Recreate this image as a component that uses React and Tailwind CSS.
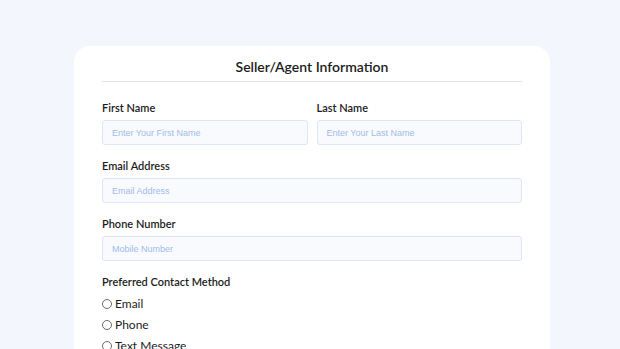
function Field({ label, placeholder }) {
  return (
    <div className="flex flex-col">
      <label className="mb-[5px] text-[11px] font-semibold leading-[14px] text-[#1c1c1c]">{label}</label>
      <input
        type="text"
        placeholder={placeholder}
        className="h-[25px] rounded-[3px] border border-[#dde6f4] bg-[#f8fafe] px-[9px] text-[9px] outline-none placeholder:text-[#a3bbe8] [font-family:'Liberation_Sans',Arial,sans-serif]"
      />
    </div>
  );
}

function Radio({ label }) {
  return (
    <label className="flex h-[21px] items-center gap-[3px]">
      <span className="h-[10px] w-[10px] rounded-full border border-[#6b6b6b]" />
      <span className="text-[12px] leading-[14px] text-[#1c1c1c]">{label}</span>
    </label>
  );
}

export default function App() {
  return (
    <div className="h-[349px] overflow-hidden bg-[#f3f6fc] pt-[46px] [font-family:Lato,'Noto_Sans',sans-serif]">
      <div className="ml-[74px] w-[476px] rounded-t-[16px] bg-white px-[28px] pt-[12px] pb-6">
        <h2 className="pb-[5px] text-center text-[14px] font-semibold leading-[18px] text-[#1c1c1c]">
          Seller/Agent Information
        </h2>
        <div className="h-px bg-[#e2e5ea]" />
        <div className="mt-[19px] grid grid-cols-2 gap-[9px]">
          <Field label="First Name" placeholder="Enter Your First Name" />
          <Field label="Last Name" placeholder="Enter Your Last Name" />
        </div>
        <div className="mt-[14px]">
          <Field label="Email Address" placeholder="Email Address" />
        </div>
        <div className="mt-[14px]">
          <Field label="Phone Number" placeholder="Mobile Number" />
        </div>
        <div className="mt-[14px] text-[11px] font-semibold leading-[14px] text-[#1c1c1c]">
          Preferred Contact Method
        </div>
        <div className="mt-[4px] flex flex-col">
          <Radio label="Email" />
          <Radio label="Phone" />
          <Radio label="Text Message" />
        </div>
      </div>
    </div>
  );
}
